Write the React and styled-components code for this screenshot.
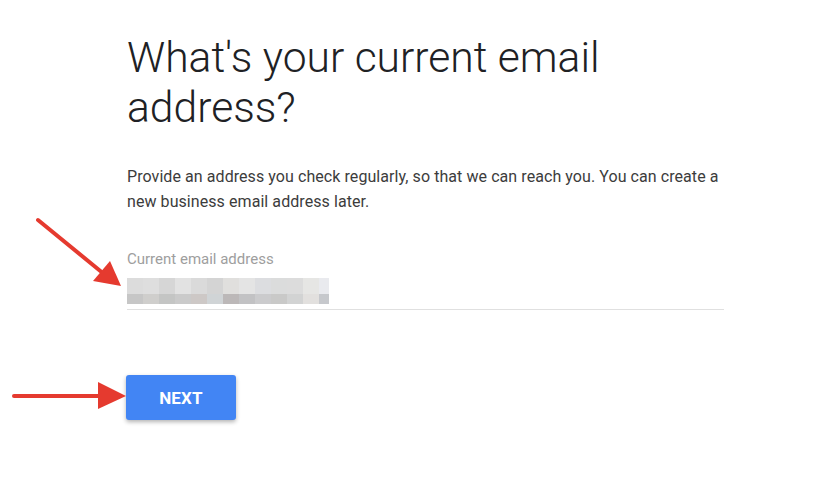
import React from "react";
import styled, { createGlobalStyle } from "styled-components";

const GlobalStyle = createGlobalStyle`
    html, body {
        margin : 0;
        padding : 0;
        background : #ffffff;
    }
    body {
        font-family : Roboto, "Liberation Sans", Arial, sans-serif;
    }
`;

const Page = styled.div`
    position : relative;
    width : 823px;
    height : 490px;
    overflow : hidden;
    background : #ffffff;
`;

const Column = styled.div`
    width : 597px;
    padding : 32px 0 0 127px;
    display : flex;
    flex-direction : column;
`;

const Title = styled.h1`
    margin : 0;
    font-size : 42.6px;
    font-weight : 300;
    line-height : 50px;
    color : #202124;
`;

const Lead = styled.p`
    margin : 32px 0 0;
    font-size : 16px;
    line-height : 25px;
    letter-spacing : 0.07px;
    color : #3c3c3c;
    width : 610px;
`;

const Field = styled.div`
    margin-top : 35px;
    display : flex;
    flex-direction : column;
    border-bottom : 1px solid #e0e0e0;
    padding-bottom : 5px;
`;

const Label = styled.label`
    font-size : 15px;
    line-height : 20px;
    color : #9e9e9e;
`;

const Redacted = styled.div`
    margin-top : 9px;
    display : grid;
    grid-template-columns : repeat(12, 16px) 10px;
    grid-template-rows : 16px 10px;
    width : 202px;
`;

const Pixel = styled.span`
    background : ${props => props.tone};
`;

const Actions = styled.div`
    margin-top : 65px;
    display : flex;
    margin-left : -1px;
`;

const NextButton = styled.button`
    width : 110px;
    height : 45px;
    border : none;
    border-radius : 3px;
    background : #4285f4;
    color : #ffffff;
    font-family : Roboto, "Liberation Sans", Arial, sans-serif;
    font-size : 17px;
    font-weight : 700;
    letter-spacing : 0.2px;
    box-shadow : 0 2px 4px rgba(0, 0, 0, 0.3);
    cursor : pointer;
`;

const Arrows = styled.svg`
    position : absolute;
    top : 0;
    left : 0;
    pointer-events : none;
`;

const topRow = ["#dcdcdc", "#dedede", "#d6d6d6", "#e2e2e2", "#dadada", "#d4d4d4", "#e0dfdd", "#e4e4e4", "#dcdde0", "#dbdcdc", "#dcdcdc", "#e6e6e4", "#e9eaee"];
const bottomRow = ["#c6c6c6", "#cfcecc", "#c4c5c4", "#cacaca", "#cdc8c6", "#d0d4d6", "#bcb8b8", "#c2c2c4", "#cbcbcd", "#c9c9c8", "#d2d3d3", "#e2e0de", "#c6c8cc"];

const App = () => (
    <Page>
        <GlobalStyle />
        <Column>
            <Title>What's your current email address?</Title>
            <Lead>
                Provide an address you check regularly, so that we can reach you. You can create a new business email address later.
            </Lead>
            <Field>
                <Label>Current email address</Label>
                <Redacted>
                    {[...topRow, ...bottomRow].map((tone, i) => <Pixel key={i} tone={tone} />)}
                </Redacted>
            </Field>
            <Actions>
                <NextButton>NEXT</NextButton>
            </Actions>
        </Column>
        {/* red annotation arrows drawn over the form */}
        <Arrows width="823" height="490" viewBox="0 0 823 490">
            <line x1="38" y1="220" x2="104" y2="274" stroke="#e53a2f" strokeWidth="4" strokeLinecap="round" />
            <polygon points="121,286 93,281 110,261" fill="#e53a2f" />
            <line x1="14" y1="396" x2="102" y2="396" stroke="#e53a2f" strokeWidth="4" strokeLinecap="round" />
            <polygon points="126,396 98,382 98,409" fill="#e53a2f" />
        </Arrows>
    </Page>
);

export default App;
